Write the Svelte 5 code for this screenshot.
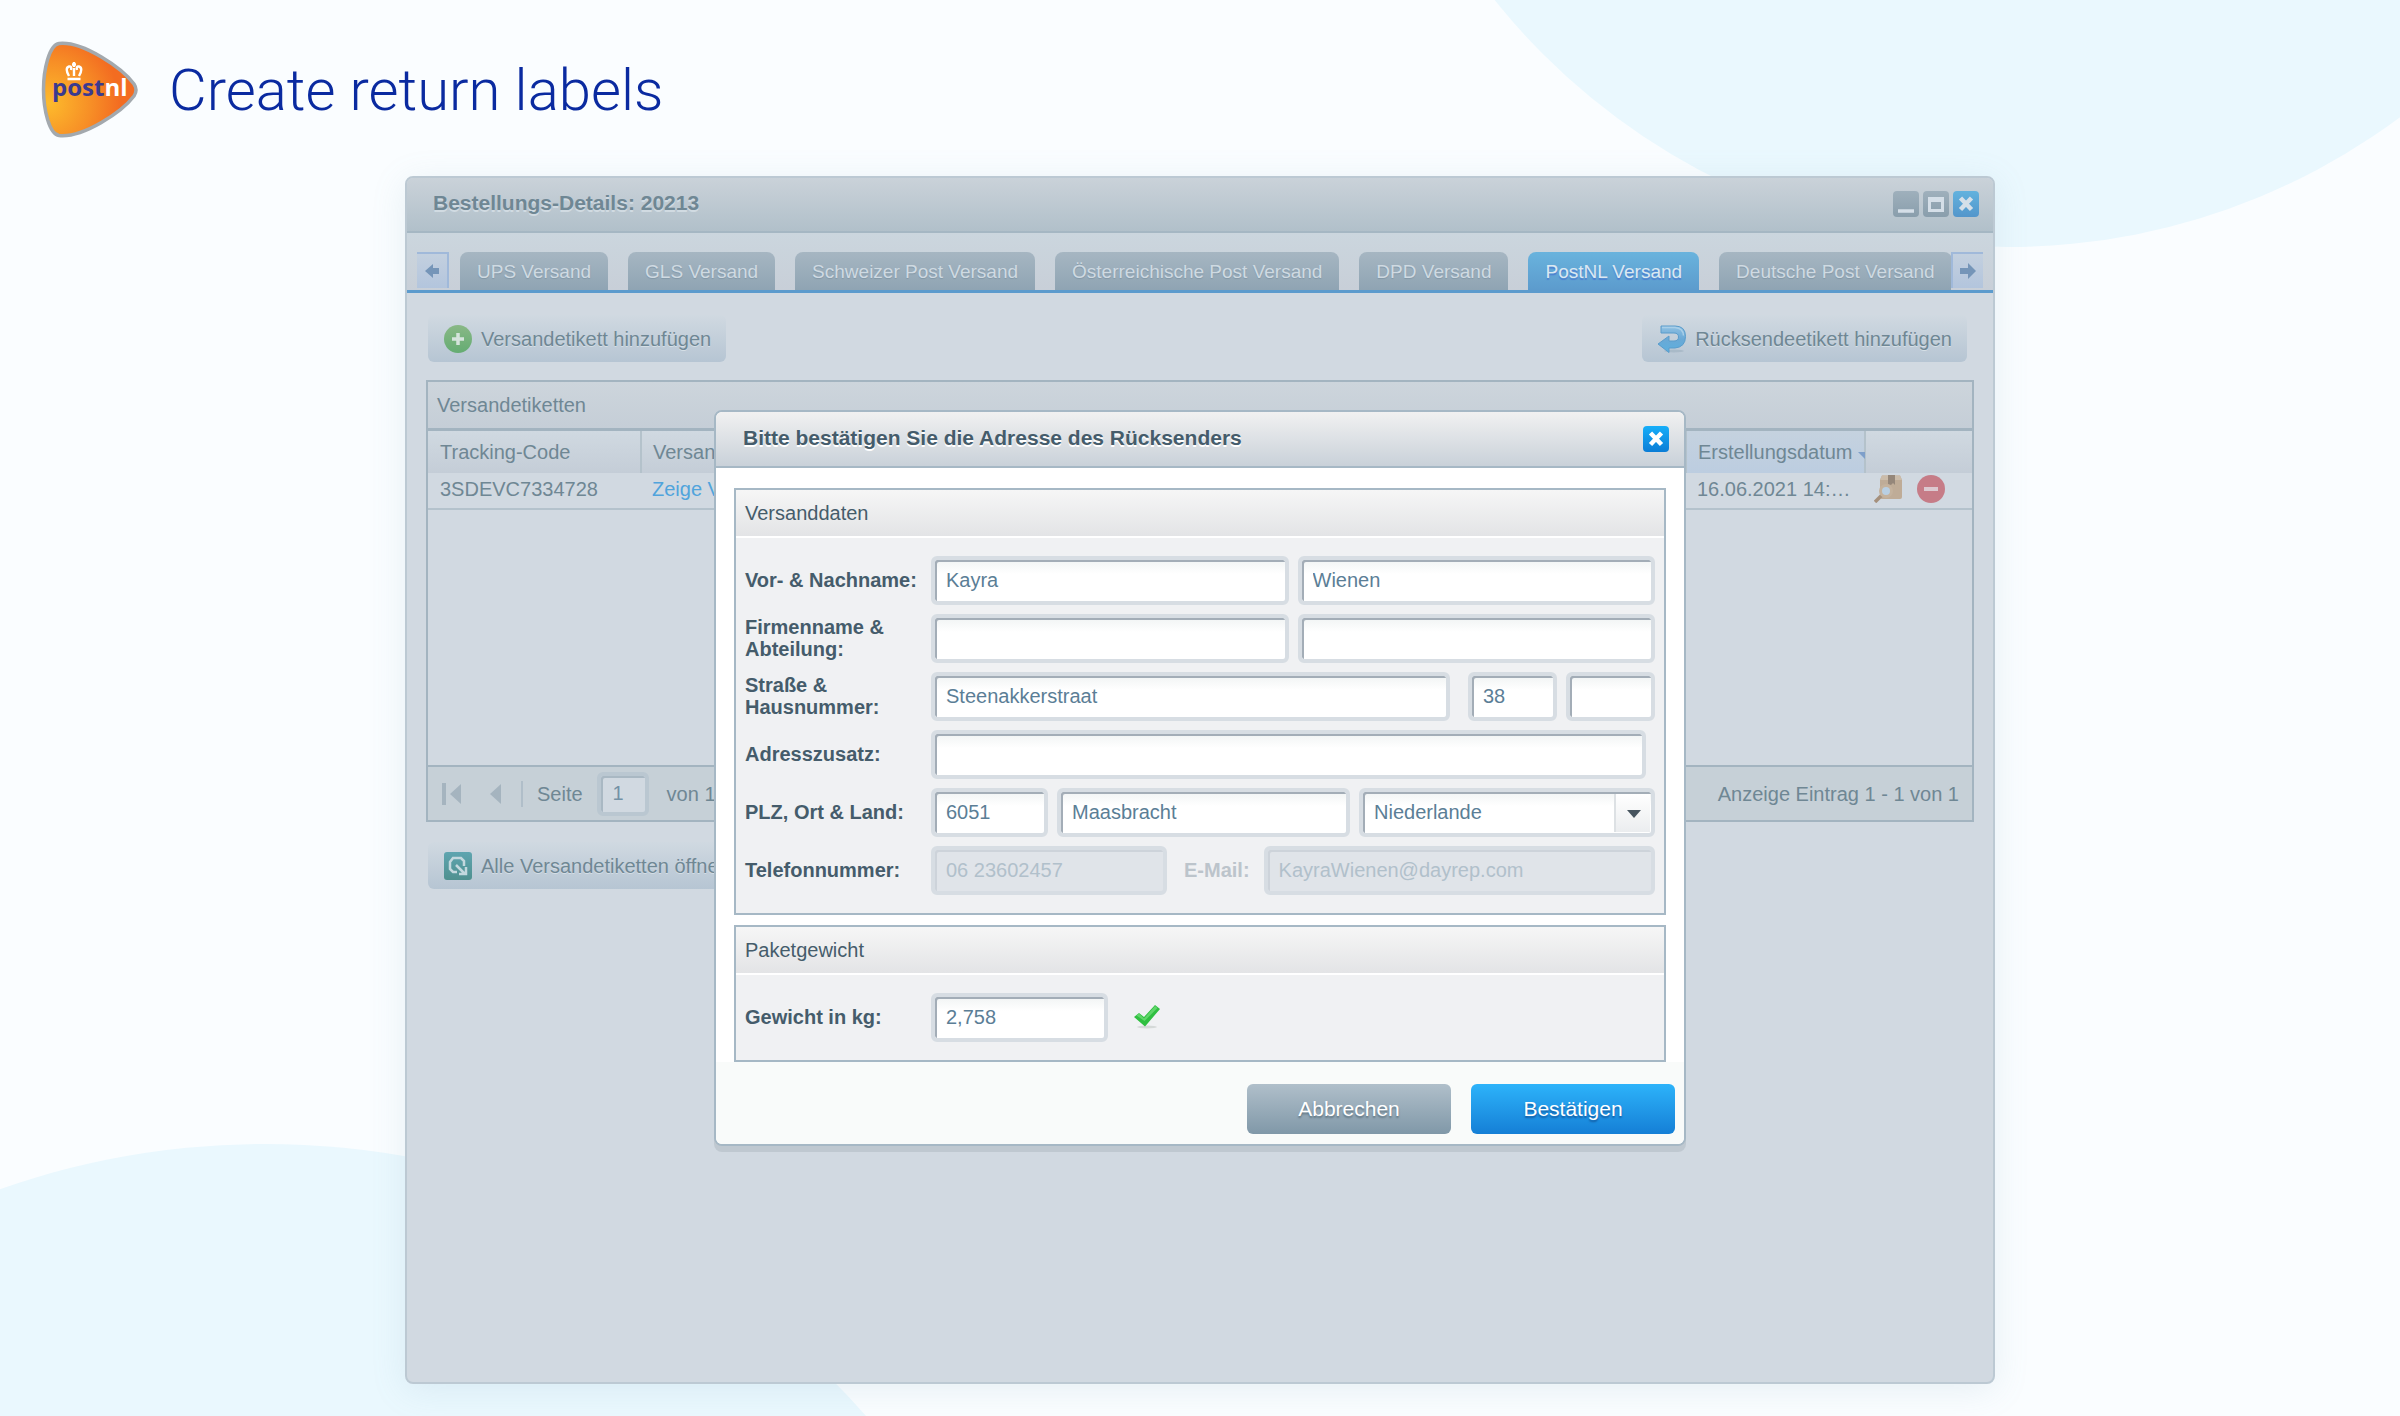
<script lang="ts">
  type Field = {
    id: string;
    label: string;
    value: string;
    size: string;
    disabled?: boolean;
  };

  type Row = { label: string; fields: Field[] };

  const tabs = [
    'UPS Versand',
    'GLS Versand',
    'Schweizer Post Versand',
    'Österreichische Post Versand',
    'DPD Versand',
    'PostNL Versand',
    'Deutsche Post Versand',
  ];

  let activeTab = $state('PostNL Versand');
  let page = $state('1');
  let country = $state('Niederlande');
  let weight = $state('2,758');

  const nameRows: Row[] = [
    {
      label: 'Vor- & Nachname:',
      fields: [
        { id: 'first-name', label: 'Vorname', value: 'Kayra', size: 'half' },
        { id: 'last-name', label: 'Nachname', value: 'Wienen', size: 'half' },
      ],
    },
    {
      label: 'Firmenname & Abteilung:',
      fields: [
        { id: 'company', label: 'Firmenname', value: '', size: 'half' },
        { id: 'department', label: 'Abteilung', value: '', size: 'half' },
      ],
    },
    {
      label: 'Straße & Hausnummer:',
      fields: [
        { id: 'street', label: 'Straße', value: 'Steenakkerstraat', size: 'street' },
        { id: 'house-number', label: 'Hausnummer', value: '38', size: 'number' },
        { id: 'house-suffix', label: 'Zusatz', value: '', size: 'number' },
      ],
    },
    {
      label: 'Adresszusatz:',
      fields: [{ id: 'address-extra', label: 'Adresszusatz', value: '', size: 'extra' }],
    },
  ];
</script>

{#snippet closeIcon()}
  <svg viewBox="0 0 26 26" aria-hidden="true">
    <path d="M7.500 7l11 11.500M18.500 7l-11 11.500" stroke="currentColor" stroke-width="4.500" fill="none" />
  </svg>
{/snippet}

{#snippet field(f: Field)}
  <input
    class="field {f.size}"
    id={f.id}
    type="text"
    value={f.value}
    aria-label={f.label}
    disabled={f.disabled}
  />
{/snippet}

<div class="page">
  <div class="bubble top"></div>
  <div class="bubble bottom"></div>

  <header>
    <svg class="logo" viewBox="0 0 98 98" role="img" aria-label="PostNL">
      <defs>
        <radialGradient id="orange" cx="0.06" cy="0.65" r="0.9">
          <stop offset="0" stop-color="#fdbb2c" />
          <stop offset="0.5" stop-color="#f78f26" />
          <stop offset="0.85" stop-color="#f36c21" />
        </radialGradient>
      </defs>
      <path
        d="M18 2.500C42 0 81 27 93 43Q97 49 93 55C81 71 42 97 18 94.500C8 93 2.500 68 2.500 48.500S8 4 18 2.500z"
        fill="url(#orange)"
        stroke="#a3a9ae"
        stroke-width="3.500"
      />
      <g fill="none" stroke="#fff" stroke-width="2.400">
        <path d="M26.500 38h13M28 35q-4.500-8 0-9.500 3-.5 2 3.500M38 35q4.500-8 0-9.500-3-.5-2 3.500M33 35V27M31 23.500h4M33 21v5" />
      </g>
      <text x="11" y="55" class="word" fill="#3b3a8f">post<tspan fill="#fff">nl</tspan></text>
    </svg>
    <h1>Create return labels</h1>
  </header>

  <main class="window">
    <div class="titlebar">
      <h2>Bestellungs-Details: 20213</h2>
      <div class="tools">
        <button type="button" class="tool grey" aria-label="Minimieren">
          <svg viewBox="0 0 26 26" aria-hidden="true">
            <path d="M5 20h16" stroke="currentColor" stroke-width="3.500" />
          </svg>
        </button>
        <button type="button" class="tool grey" aria-label="Maximieren">
          <svg viewBox="0 0 26 26" aria-hidden="true">
            <path d="M5 6h16v15H5zM8 11v7h10v-7z" fill="currentColor" fill-rule="evenodd" />
          </svg>
        </button>
        <button type="button" class="tool blue" aria-label="Schließen">{@render closeIcon()}</button>
      </div>
    </div>

    <div class="tabbar">
      <button type="button" class="scroller left" aria-label="Zurück scrollen">
        <svg viewBox="0 0 18 18" aria-hidden="true">
          <path d="M2 9l8-7v4h6v6h-6v4z" fill="currentColor" />
        </svg>
      </button>
      <div class="tabs" role="tablist">
        {#each tabs as tab (tab)}
          <button
            type="button"
            role="tab"
            class="tab"
            class:active={tab === activeTab}
            aria-selected={tab === activeTab}
            onclick={() => (activeTab = tab)}
          >{tab}</button>
        {/each}
      </div>
      <button type="button" class="scroller right" aria-label="Weiter scrollen">
        <svg viewBox="0 0 18 18" aria-hidden="true">
          <path d="M17 9L9 1v5H1v6h8v5z" fill="currentColor" />
        </svg>
      </button>
    </div>

    <div class="content">
      <div class="toolbar">
        <button type="button" class="action">
          <svg viewBox="0 0 28 28" aria-hidden="true">
            <defs>
              <linearGradient id="green" x2="0" y2="1">
                <stop offset="0" stop-color="#89b886" />
                <stop offset="1" stop-color="#64ac72" />
              </linearGradient>
            </defs>
            <circle cx="14" cy="14" r="14" fill="url(#green)" />
            <path d="M14 8v12M8 14h12" stroke="#d5e3dc" stroke-width="3.500" />
          </svg>
          Versandetikett hinzufügen
        </button>
        <button type="button" class="action">
          <svg viewBox="0 0 28 28" aria-hidden="true">
            <defs>
              <linearGradient id="arrow" x2="0" y2="1">
                <stop offset="0" stop-color="#8fc0e2" />
                <stop offset="0.5" stop-color="#6aa9d6" />
                <stop offset="1" stop-color="#5cb0de" />
              </linearGradient>
            </defs>
            <ellipse cx="16" cy="26" rx="10" ry="1.500" fill="#a9bac8" />
            <path
              d="M3 1h14q10.500 0 10.500 10.500T17 23h-6v4.500L0 19l11-8v5h5q4.500 0 4.500-4T16 8H3z"
              fill="url(#arrow)"
              stroke="#5a9ccb"
            />
            <path d="M4 2.500h13q8 .5 8.500 8" stroke="#a9cfe8" stroke-width="1.500" fill="none" />
          </svg>
          Rücksendeetikett hinzufügen
        </button>
      </div>

      <section class="grid">
        <h3>Versandetiketten</h3>
        <table>
          <thead>
            <tr>
              <th class="code">Tracking-Code</th>
              <th>Versandetikett</th>
              <th class="date sorted">Erstellungsdatum <i></i></th>
              <th class="icons" aria-label="Aktionen"></th>
            </tr>
          </thead>
          <tbody>
            <tr>
              <td>3SDEVC7334728</td>
              <td><a href="#label">Zeige Versandetikett</a></td>
              <td>16.06.2021 14:…</td>
              <td class="icons">
                <button type="button" aria-label="Sendung verfolgen">
                  <svg viewBox="0 0 28 28" aria-hidden="true">
                    <path d="M6 5l2-4.500h18L28 5v17q0 2-2 2H8q-2 0-2-2z" fill="#bfac97" />
                    <path d="M6 5l2-4.500h18L28 5z" fill="#cbbcaa" />
                    <path d="M14 0h7v10l-2-2-2 2-3-1z" fill="#95877a" />
                    <path d="M8 20l-7 7" stroke="#a5907c" stroke-width="3.500" />
                    <circle cx="12" cy="16" r="5.500" fill="#b9cfe2" stroke="#c4b29d" stroke-width="3" />
                  </svg>
                </button>
                <button type="button" aria-label="Löschen">
                  <svg viewBox="0 0 28 28" aria-hidden="true">
                    <circle cx="14" cy="14" r="14" fill="#c67c87" />
                    <path d="M7 14h14" stroke="#dcc9d0" stroke-width="4" />
                  </svg>
                </button>
              </td>
            </tr>
          </tbody>
        </table>
        <div class="pager">
          <button type="button" aria-label="Erste Seite">
            <svg viewBox="0 0 20 22" aria-hidden="true">
              <path d="M1 0h4v22H1zM20 1v20L9 11z" fill="currentColor" />
            </svg>
          </button>
          <button type="button" aria-label="Vorherige Seite">
            <svg viewBox="0 0 20 22" aria-hidden="true">
              <path d="M16 1v20L5 11z" fill="currentColor" />
            </svg>
          </button>
          <span class="divider"></span>
          <label for="page">Seite</label>
          <input id="page" class="field" type="text" bind:value={page} />
          <span>von 1</span>
          <span class="summary">Anzeige Eintrag 1 - 1 von 1</span>
        </div>
      </section>

      <div class="toolbar">
        <button type="button" class="action">
          <svg viewBox="0 0 28 28" aria-hidden="true">
            <defs>
              <linearGradient id="teal" x2="0" y2="1">
                <stop offset="0" stop-color="#5fa5b0" />
                <stop offset="1" stop-color="#4f908f" />
              </linearGradient>
            </defs>
            <rect width="28" height="28" rx="3" fill="url(#teal)" />
            <path
              d="M13 20H9l-3-3V10l3-4h8l3 3v5M12 13l9 9M22 15v7h-7"
              fill="none"
              stroke="#c3d8de"
              stroke-width="2.500"
            />
          </svg>
          Alle Versandetiketten öffnen
        </button>
      </div>
    </div>

    <div class="overlay">
      <form class="dialog" onsubmit={(e) => e.preventDefault()}>
        <div class="dialog-title">
          <h2>Bitte bestätigen Sie die Adresse des Rücksenders</h2>
          <button type="button" class="tool bright" aria-label="Schließen">{@render closeIcon()}</button>
        </div>

        <div class="panels">
          <fieldset>
            <h3>Versanddaten</h3>
            <div class="rows">
              {#each nameRows as row (row.label)}
                <div class="row">
                  <label for={row.fields[0].id}>{row.label}</label>
                  <div class="fields">
                    {#each row.fields as f (f.id)}
                      {@render field(f)}
                    {/each}
                  </div>
                </div>
              {/each}
              <div class="row">
                <label for="zip">PLZ, Ort &amp; Land:</label>
                <div class="fields">
                  {@render field({ id: 'zip', label: 'PLZ', value: '6051', size: 'zip' })}
                  {@render field({ id: 'city', label: 'Ort', value: 'Maasbracht', size: 'city' })}
                  <div class="combo">
                    <select class="field" bind:value={country} aria-label="Land">
                      <option>Niederlande</option>
                      <option>Deutschland</option>
                    </select>
                    <span class="trigger"></span>
                  </div>
                </div>
              </div>
              <div class="row">
                <label for="phone">Telefonnummer:</label>
                <div class="fields">
                  {@render field({ id: 'phone', label: 'Telefonnummer', value: '06 23602457', size: 'phone', disabled: true })}
                  <label class="mail" for="email">E-Mail:</label>
                  {@render field({ id: 'email', label: 'E-Mail', value: 'KayraWienen@dayrep.com', size: 'email', disabled: true })}
                </div>
              </div>
            </div>
          </fieldset>

          <fieldset>
            <h3>Paketgewicht</h3>
            <div class="rows">
              <div class="row">
                <label for="weight">Gewicht in kg:</label>
                <div class="fields">
                  <input id="weight" class="field weight" type="text" bind:value={weight} />
                  <svg class="check" viewBox="0 0 26 24" aria-hidden="true">
                    <ellipse cx="13" cy="22" rx="10" ry="1.500" fill="#d5d9d8" />
                    <path d="M0 12l5-4 5 4L21 0l5 4-15 17.500z" fill="#2fbf40" />
                    <path d="M5 8.500l5 5L21 1l2.500 2-13 13-8-5.500z" fill="#5fd669" />
                  </svg>
                </div>
              </div>
            </div>
          </fieldset>
        </div>

        <div class="buttons">
          <button type="button" class="cancel">Abbrechen</button>
          <button type="submit" class="confirm">Bestätigen</button>
        </div>
      </form>
    </div>
  </main>
</div>

<style>
  .page {
    position: relative;
    display: flex;
    flex-direction: column;
    min-height: 100vh;
    box-sizing: border-box;
    padding-bottom: 32px;
    overflow: hidden;
    background: #fafdff;
    font: 20px/24px "Liberation Sans", Arial, sans-serif;
    color: #6f8794;
  }

  button,
  input,
  select {
    font: inherit;
    color: inherit;
  }

  button {
    border: 0;
    padding: 0;
    background: none;
    cursor: pointer;
  }

  svg {
    display: block;
  }

  h1,
  h2,
  h3 {
    margin: 0;
    font: inherit;
  }

  .bubble {
    position: absolute;
    border-radius: 50%;
    background: #eaf8fe;
  }

  .bubble.top {
    width: 1314px;
    height: 1314px;
    right: -265px;
    top: -1067px;
  }

  .bubble.bottom {
    width: 1600px;
    height: 1600px;
    left: -535px;
    top: 1144px;
  }

  header {
    position: relative;
    display: flex;
    align-items: center;
    gap: 30px;
    height: 173px;
    padding: 3px 0 0 41px;
  }

  .logo {
    width: 98px;
    height: 98px;
  }

  .word {
    font: bold 24px "Open Sans", sans-serif;
  }

  h1 {
    font: 300 58px/70px Roboto, sans-serif;
    color: #0a2aa0;
  }

  .window {
    position: relative;
    flex: 1;
    width: 66.25%;
    margin: 0 auto;
    box-sizing: border-box;
    display: flex;
    flex-direction: column;
    border: 2px solid #bcc9d3;
    border-radius: 8px;
    background: #d1d9e1;
    box-shadow: 0 6px 34px rgba(120, 160, 180, 0.15);
  }

  .titlebar {
    display: flex;
    align-items: center;
    justify-content: space-between;
    height: 51px;
    padding: 0 14px 2px 26px;
    border-bottom: 2px solid #a5b7c3;
    border-radius: 6px 6px 0 0;
    background: linear-gradient(#cad2d9, #b1c0ca);
  }

  h2 {
    padding-bottom: 2px;
    font-size: 21px;
    font-weight: bold;
  }

  .titlebar h2 {
    text-shadow: 0 2px 0 #d1dbe2;
  }

  .tools {
    display: flex;
    gap: 4px;
  }

  .tool {
    width: 26px;
    height: 26px;
    border-radius: 4px;
    color: #d5dfe8;
  }

  .tool.grey {
    background: linear-gradient(#9fb0bc, #899eac);
  }

  .tool.blue {
    background: linear-gradient(#62b2de, #5396cb);
  }

  .tool.bright {
    background: linear-gradient(#16aef9, #0b7dd6);
    color: #fff;
  }

  .tabbar {
    display: flex;
    align-items: flex-end;
    height: 57px;
    padding: 0 10px;
    border-bottom: 3px solid #5c9bcd;
    background: linear-gradient(#cbd6de, #c8cfd8);
  }

  .scroller {
    display: flex;
    align-items: center;
    justify-content: center;
    flex: none;
    box-sizing: border-box;
    width: 32px;
    height: 36px;
    margin-bottom: 2px;
    border: 2px solid #a0b9da;
    border-bottom: 0;
    background: linear-gradient(#c3d0df, #b3c5dd);
    color: #7595b8;
  }

  .scroller.left {
    border-left: 0;
  }

  .scroller.right {
    border-right: 0;
  }

  .scroller svg {
    width: 18px;
    height: 18px;
  }

  .tabs {
    flex: 1;
    display: flex;
    gap: 20px;
    min-width: 0;
    padding-left: 11px;
    overflow: hidden;
  }

  .tab {
    flex: none;
    height: 38px;
    padding: 1px 17px 0;
    border-radius: 8px 8px 0 0;
    background: linear-gradient(#a6b6c2, #8fa4b3);
    color: #cfdae2;
    font-size: 19px;
    text-shadow: 0 1px 1px #8297a6;
  }

  .tab.active {
    background: linear-gradient(#69b3dd, #5c9bcd);
    color: #dbe8f2;
    text-shadow: 0 2px 1px #4d7fd0;
  }

  .content {
    padding: 22px 19px 0;
  }

  .toolbar {
    display: flex;
    justify-content: space-between;
    padding: 0 7px 0 2px;
  }

  .action {
    display: flex;
    align-items: center;
    gap: 9px;
    height: 47px;
    padding: 0 15px 0 16px;
    border-radius: 6px;
    background: linear-gradient(#d0d9e1, #b6c5d3);
    text-shadow: 0 1px 0 #d5dfe6;
  }

  .action svg {
    width: 28px;
    height: 28px;
  }

  .grid {
    margin: 18px 0 20px;
    border: 2px solid #a3b4c0;
  }

  .grid h3 {
    height: 46px;
    padding-left: 9px;
    border-bottom: 3px solid #a3b4c0;
    background: linear-gradient(#cdd5dc, #c5ced7);
    line-height: 46px;
  }

  table {
    width: 100%;
    border-collapse: collapse;
    table-layout: fixed;
  }

  th,
  td {
    box-sizing: border-box;
    padding: 0 0 0 11px;
    font-weight: normal;
    text-align: left;
    white-space: nowrap;
  }

  th {
    height: 42px;
    border-right: 2px solid #b4c2cb;
    background: linear-gradient(#d0d9e1, #c4cdd7);
  }

  td {
    height: 36px;
    padding-bottom: 4px;
    border-bottom: 2px solid #b4c2cc;
  }

  th:first-child,
  td:first-child {
    padding-left: 12px;
  }

  .code {
    width: 213px;
  }

  .date {
    width: 179px;
  }

  .sorted {
    background: linear-gradient(#c5d2df, #bccde0);
  }

  .sorted i {
    display: inline-block;
    border: solid transparent;
    border-width: 7px 0 0 7px;
    border-top-color: #7e9fca;
  }

  .icons {
    width: 107px;
    padding-left: 9px;
    border-right: 0;
  }

  td.icons button {
    width: 28px;
    margin-right: 9px;
    vertical-align: middle;
  }

  a {
    color: #50a4dc;
    text-decoration: none;
  }

  .pager {
    display: flex;
    align-items: center;
    height: 53px;
    margin-top: 255px;
    padding: 0 13px;
    border-top: 2px solid #a3b4c0;
    background: #c6d0d7;
  }

  .pager button {
    width: 20px;
    margin-right: 24px;
    color: #a5b4bf;
  }

  .pager button + button {
    margin-right: 16px;
  }

  .divider {
    width: 2px;
    height: 26px;
    margin-right: 14px;
    background: #b0bec9;
  }

  .pager .field {
    width: 52px;
    height: 44px;
    margin: 0 18px 0 14px;
    padding: 0 12px;
    border-color: #bac7d1;
    background: #d1d9e1;
    box-shadow: inset 2px 2px 0 #a9b8c3;
    color: #7391a6;
  }

  .summary {
    margin-left: auto;
  }

  .field {
    box-sizing: border-box;
    min-width: 0;
    height: 49px;
    padding: 0 11px;
    border: 4px solid #d7dde3;
    border-radius: 6px;
    background: linear-gradient(#f1f4f4, #fff 14px);
    box-shadow: inset 2px 2px 0 #a3adb7;
    color: #5b7e96;
    outline: none;
  }

  .field:disabled {
    background: #e0e4e9;
    box-shadow: inset 2px 2px 0 #cdd3da;
    color: #b1c0cb;
    opacity: 1;
  }

  .overlay {
    position: absolute;
    inset: 0;
    display: flex;
    align-items: center;
    justify-content: center;
    padding-bottom: 5px;
  }

  .dialog {
    box-sizing: border-box;
    width: 972px;
    max-width: 100%;
    border: 2px solid #a6b8c5;
    border-radius: 8px;
    background: #fff;
    box-shadow: 0 6px 0 #bfc8d0;
    color: #455c6b;
    overflow: hidden;
  }

  .dialog-title {
    display: flex;
    align-items: center;
    justify-content: space-between;
    height: 54px;
    padding: 0 15px 0 27px;
    border-bottom: 2px solid #a6b8c5;
    background: linear-gradient(#f1f1f1, #c9d1d9);
  }

  .dialog-title h2 {
    text-shadow: 0 2px 0 #fff;
  }

  .panels {
    display: flex;
    flex-direction: column;
    gap: 10px;
    padding: 20px 18px 0;
  }

  fieldset {
    min-width: 0;
    margin: 0;
    padding: 0;
    border: 2px solid #a6b8c5;
    background: #f0f1f3;
  }

  fieldset h3 {
    height: 46px;
    padding-left: 9px;
    border-bottom: 2px solid #fff;
    background: linear-gradient(#f6f6f6, #e3e4e6);
    line-height: 46px;
  }

  .rows {
    display: flex;
    flex-direction: column;
    gap: 9px;
    padding: 18px 9px;
  }

  .row {
    display: flex;
    align-items: center;
  }

  .row > label {
    flex: none;
    width: 178px;
    margin-right: 8px;
    font-weight: bold;
    line-height: 22px;
  }

  .fields {
    flex: 1;
    display: flex;
    align-items: center;
    gap: 9px;
    min-width: 0;
  }

  .half,
  .street,
  .extra,
  .city,
  .email {
    flex: 1;
  }

  .extra,
  .street {
    margin-right: 9px;
  }

  .number {
    width: 89px;
  }

  .zip {
    width: 117px;
  }

  .combo {
    position: relative;
    width: 296px;
  }

  .combo .field {
    width: 100%;
    appearance: none;
  }

  .trigger {
    position: absolute;
    top: 6px;
    right: 5px;
    width: 34px;
    height: 38px;
    border-left: 2px solid #dde1e4;
    background: linear-gradient(#fff, #ebedef);
    pointer-events: none;
  }

  .trigger::after {
    content: '';
    position: absolute;
    top: 16px;
    left: 11px;
    border: solid transparent;
    border-width: 8px 7px 0;
    border-top-color: #47555f;
  }

  .phone {
    width: 236px;
  }

  .mail {
    margin: 0 5px 0 8px;
    font-weight: bold;
    color: #bcc4cb;
  }

  .weight {
    width: 177px;
  }

  .check {
    width: 26px;
    height: 24px;
    margin-left: 17px;
  }

  .buttons {
    display: flex;
    justify-content: flex-end;
    gap: 20px;
    padding: 22px 9px 10px;
    background: #f9fbfa;
  }

  .buttons button {
    width: 204px;
    height: 50px;
    border-radius: 6px;
    color: #fff;
    font-size: 21px;
  }

  .cancel {
    background: linear-gradient(#b0bfca, #8098a8);
    text-shadow: 0 2px 2px #5f7481;
  }

  .confirm {
    background: linear-gradient(#2db3fa, #157fd6);
    text-shadow: 0 2px 2px #1259a0;
  }
</style>
